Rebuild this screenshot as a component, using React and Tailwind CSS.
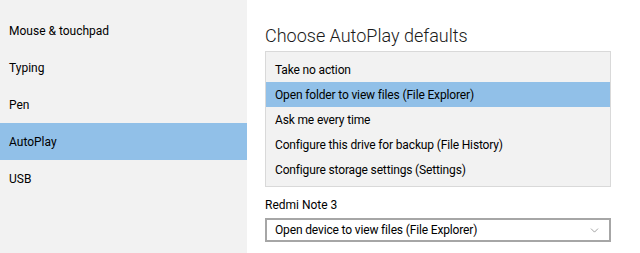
import { ChevronDown } from "lucide-react";

const navItems = ["Mouse & touchpad", "Typing", "Pen", "AutoPlay", "USB"];

const options = [
    "Take no action",
    "Open folder to view files (File Explorer)",
    "Ask me every time",
    "Configure this drive for backup (File History)",
    "Configure storage settings (Settings)",
];

export default function App() {
    const font = { fontFamily: "Roboto, 'Noto Sans', sans-serif" };

    return (
        <div className="flex w-[640px] h-[253px] overflow-hidden bg-white text-black" style={font}>
            <div className="w-[247px] shrink-0 bg-[#f2f2f2] pt-[12px]">
                {navItems.map((item) => (
                    <div
                        key={item}
                        className={
                            item === "AutoPlay"
                                ? "h-[37px] flex items-center pl-[9px] text-[12px] bg-[#91c0e8]"
                                : "h-[37px] flex items-center pl-[9px] text-[12px]"
                        }
                    >
                        {item}
                    </div>
                ))}
            </div>

            <div className="flex-1 pl-[18px] pt-[22px]">
                <h1 className="text-[18px] leading-[27px] font-light text-[#1a1a1a]">Choose AutoPlay defaults</h1>

                <ul className="mt-[2px] w-[346px] border border-[#d9d9d9] bg-[#f2f2f2] pt-[5px] pb-[4px]">
                    {options.map((opt) => (
                        <li
                            key={opt}
                            className={
                                opt.startsWith("Open folder")
                                    ? "h-[25px] flex items-center pl-[9px] text-[12px] tracking-[-0.15px] bg-[#91c0e8]"
                                    : "h-[25px] flex items-center pl-[9px] text-[12px] tracking-[-0.15px]"
                            }
                        >
                            {opt}
                        </li>
                    ))}
                </ul>

                <p className="mt-[8px] text-[12px] leading-[20px]">Redmi Note 3</p>

                <div className="mt-[3px] w-[346px] h-[24px] border-2 border-[#a6a6a6] flex items-center justify-between pl-[8px] pr-[8px]">
                    <span className="text-[12px] tracking-[-0.15px]">Open device to view files (File Explorer)</span>
                    <ChevronDown size={13} strokeWidth={1} className="text-[#555]" />
                </div>
            </div>
        </div>
    );
}
